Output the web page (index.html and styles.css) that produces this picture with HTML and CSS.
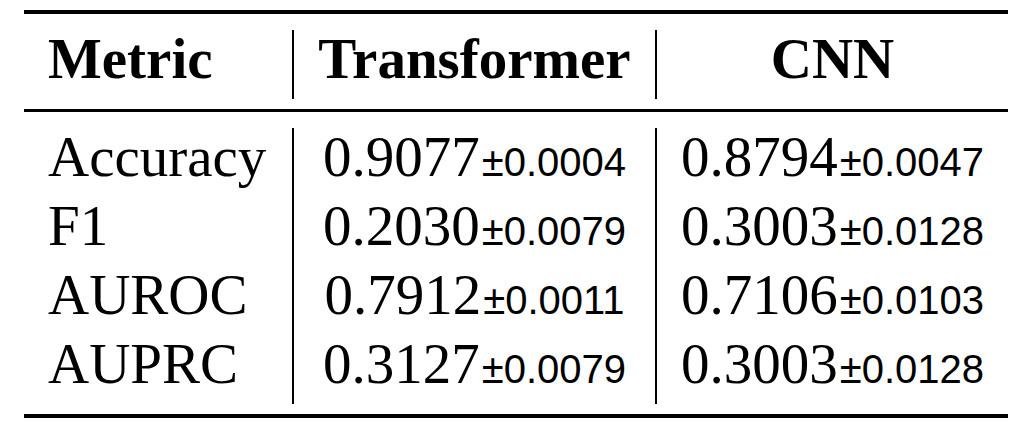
FILE: index.html
```html
<!DOCTYPE html>
<html lang="en">
<head>
    <meta charset="UTF-8">
    <meta name="viewport" content="width=device-width, initial-scale=1.0">
    <title>Model Comparison</title>
    <link rel="stylesheet" href="styles.css">
</head>
<body>
    <div class="results">
        <div class="results-head">
            <div class="cell cell-metric">Metric</div>
            <div class="cell cell-value">Transformer</div>
            <div class="cell cell-value">CNN</div>
        </div>
        <div class="results-body">
            <div class="cell cell-metric">Accuracy</div>
            <div class="cell cell-value">0.9077<span class="pm">±0.0004</span></div>
            <div class="cell cell-value">0.8794<span class="pm">±0.0047</span></div>

            <div class="cell cell-metric">F1</div>
            <div class="cell cell-value">0.2030<span class="pm">±0.0079</span></div>
            <div class="cell cell-value">0.3003<span class="pm">±0.0128</span></div>

            <div class="cell cell-metric">AUROC</div>
            <div class="cell cell-value">0.7912<span class="pm">±0.0011</span></div>
            <div class="cell cell-value">0.7106<span class="pm">±0.0103</span></div>

            <div class="cell cell-metric">AUPRC</div>
            <div class="cell cell-value">0.3127<span class="pm">±0.0079</span></div>
            <div class="cell cell-value">0.3003<span class="pm">±0.0128</span></div>
        </div>
    </div>
</body>
</html>
```

FILE: styles.css
```css
:root {
    --rule-color: #000;
}
body {
    margin: 0;
    padding: 0;
    background-color: white;
    color: #000;
    font-family: "Liberation Serif", "Times New Roman", serif;
    font-size: 57px;
}
.results {
    width: 984px;
    margin: 10px 0 0 24px;
    border-top: 4px solid var(--rule-color);
    border-bottom: 4px solid var(--rule-color);
}
.results-head,
.results-body {
    display: grid;
    grid-template-columns: 268px 363px 353px;
    grid-auto-rows: 69px;
}
.results-head {
    padding: 16px 0 10px;
    border-bottom: 3px solid var(--rule-color);
    font-weight: bold;
}
.results-body {
    padding: 16px 0 10px;
}
.cell {
    line-height: 57px;
    padding-bottom: 12px;
    white-space: nowrap;
}
.cell-metric {
    padding-left: 24px;
}
.cell-value {
    border-left: 2px solid var(--rule-color);
    text-align: center;
}
.pm {
    font-family: "Liberation Sans", Arial, sans-serif;
    font-size: 40px;
    line-height: 1;
    margin-left: 2px;
}
```
